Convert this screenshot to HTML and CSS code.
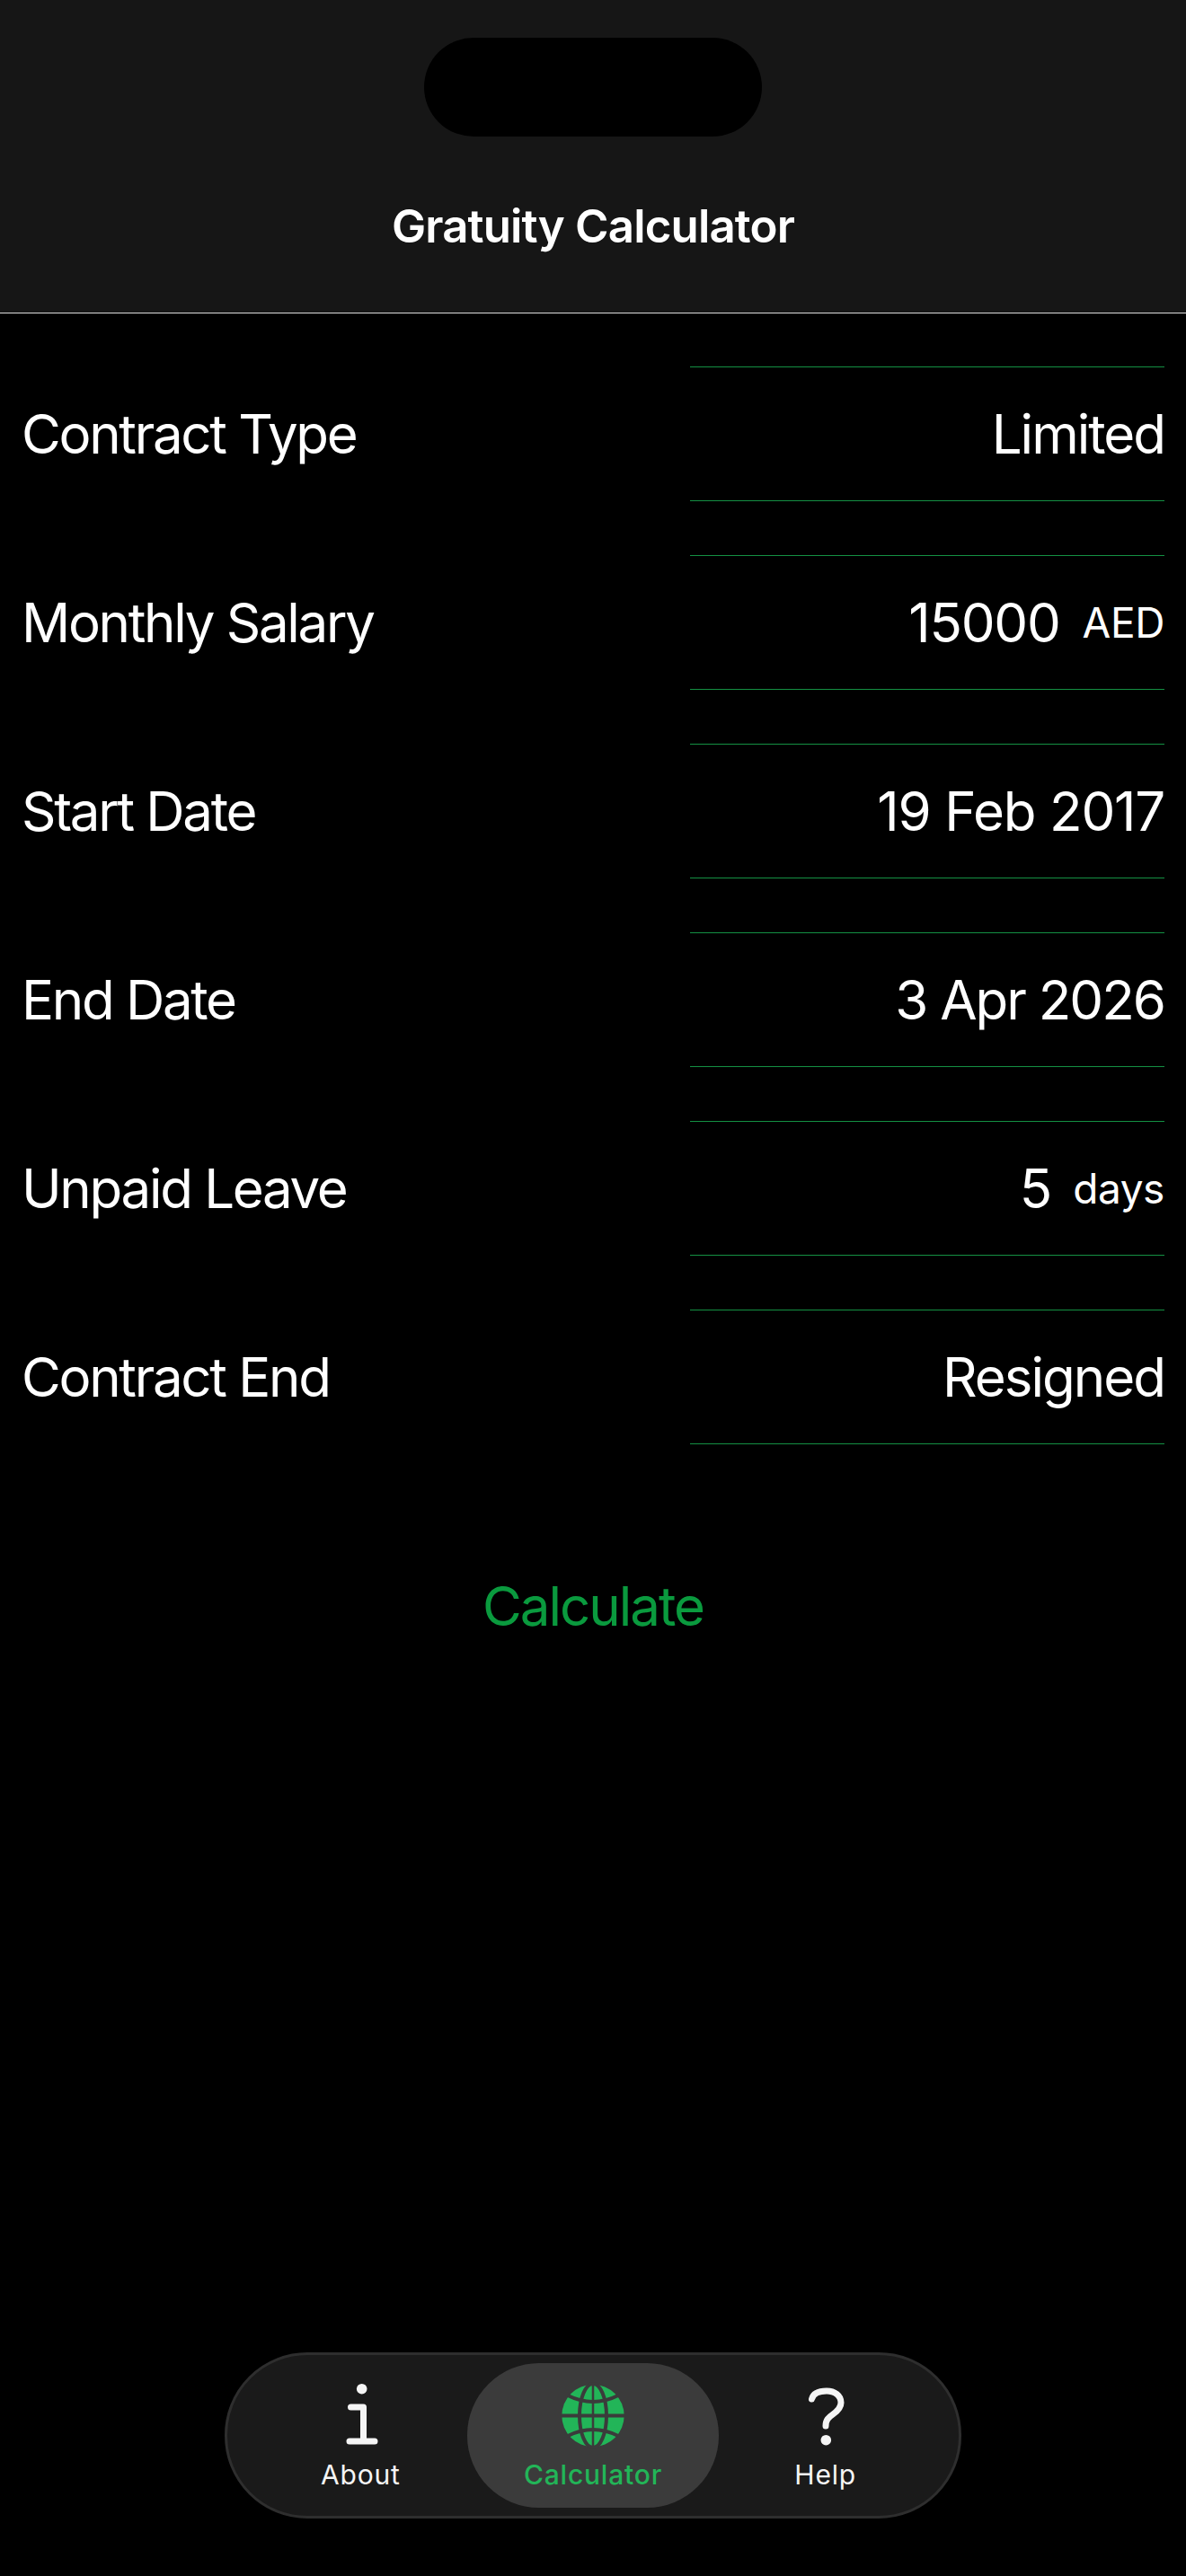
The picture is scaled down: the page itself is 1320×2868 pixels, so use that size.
FILE: index.html
```html
<!DOCTYPE html>
<html lang="en">
<head>
<meta charset="utf-8">
<title>Gratuity Calculator</title>
<link rel="stylesheet" href="styles.css">
</head>
<body>
<header class="topbar">
  <div class="island"></div>
  <h1 class="title">Gratuity Calculator</h1>
</header>
<main class="form">
  <div class="row"><span class="label">Contract Type</span><div class="field"><span class="value">Limited</span></div></div>
  <div class="row"><span class="label">Monthly Salary</span><div class="field"><span class="value value-digits">15000</span><span class="unit">AED</span></div></div>
  <div class="row"><span class="label">Start Date</span><div class="field"><span class="value value-digits">19 Feb 2017</span></div></div>
  <div class="row"><span class="label">End Date</span><div class="field"><span class="value">3 Apr 2026</span></div></div>
  <div class="row"><span class="label">Unpaid Leave</span><div class="field"><span class="value">5</span><span class="unit">days</span></div></div>
  <div class="row"><span class="label">Contract End</span><div class="field"><span class="value">Resigned</span></div></div>
  <button class="calc" type="button">Calculate</button>
</main>
<nav class="tabbar">
  <div class="tab">
    <svg class="icon" viewBox="0 0 80 80" width="80" height="80"><circle cx="41.7" cy="10.7" r="5.8" fill="#f5f5f5"/><path d="M29.5 31H43.5V69M28 69H56" fill="none" stroke="#f5f5f5" stroke-width="7" stroke-linecap="round" stroke-linejoin="round"/></svg>
    <span class="tab-label">About</span>
  </div>
  <div class="tab tab-active">
    <svg class="icon" viewBox="0 0 80 80" width="80" height="80"><circle cx="40" cy="40.5" r="34.7" fill="#22b558"/><g fill="none" stroke="#3b3b3b"><path d="M40 5V76" stroke-width="2.5"/><path d="M5 40.5H75" stroke-width="4"/><ellipse cx="40" cy="40.5" rx="15" ry="35.5" stroke-width="4"/><path d="M12 18Q40 32 68 18M12 63Q40 49 68 63" stroke-width="4"/></g></svg>
    <span class="tab-label">Calculator</span>
  </div>
  <div class="tab">
    <svg class="icon" viewBox="0 0 80 80" width="80" height="80"><path d="M24.5 22C26 16 32 13 41 13C50 13 57 18 57 26C57 32 53 35.5 48 39C43 42.500 40 45 40 52" fill="none" stroke="#f5f5f5" stroke-width="7" stroke-linecap="round"/><circle cx="40.300" cy="67.700" r="5.800" fill="#f5f5f5"/></svg>
    <span class="tab-label">Help</span>
  </div>
</nav>
</body>
</html>
```
FILE: styles.css
```css
* { box-sizing: border-box; }
html, body { margin: 0; padding: 0; }
body {
  width: 1320px;
  height: 2868px;
  background: #000;
  color: #fff;
  font-family: Inter, "Liberation Sans", sans-serif;
  display: flex;
  flex-direction: column;
  overflow: hidden;
}
.topbar {
  height: 349px;
  flex: none;
  background: #161616;
  border-bottom: 1px solid #dcdcdc;
  padding-top: 42px;
  display: flex;
  flex-direction: column;
  align-items: center;
}
.island {
  width: 376px;
  height: 110px;
  border-radius: 55px;
  background: #000;
}
.title {
  margin: 70px 0 0;
  font-size: 51px;
  line-height: 60px;
  font-weight: 600;
  letter-spacing: -0.85px;
}
.form {
  flex: 1;
  padding: 59px 24px 0 24px;
  display: flex;
  flex-direction: column;
  gap: 60px;
}
.row {
  height: 150px;
  display: flex;
  align-items: center;
  justify-content: space-between;
}
.label {
  font-size: 60px;
  line-height: 70px;
  letter-spacing: -2.3px;
}
.field {
  width: 528px;
  height: 150px;
  border-top: 1px solid #149043;
  border-bottom: 1px solid #149043;
  display: flex;
  align-items: center;
  justify-content: flex-end;
  gap: 25px;
}
.value {
  font-size: 60px;
  line-height: 70px;
  letter-spacing: -2px;
}
.value-digits {
  letter-spacing: -1.2px;
}
.unit {
  font-size: 46px;
  line-height: 70px;
  letter-spacing: -0.4px;
}
.calc {
  align-self: center;
  margin-top: 85px;
  padding: 0;
  background: none;
  border: 0;
  color: #0a9a3e;
  font-family: inherit;
  font-size: 60px;
  line-height: 70px;
  letter-spacing: -2px;
}
.tabbar {
  flex: none;
  align-self: center;
  width: 820px;
  height: 185px;
  margin-bottom: 64px;
  padding: 0 19px;
  border: 3px solid #2e2e2e;
  border-radius: 92px;
  background: #1a1a1a;
  display: flex;
  align-items: center;
}
.tab {
  width: 259px;
  height: 161px;
  display: flex;
  flex-direction: column;
  align-items: center;
  color: #f5f5f5;
}
.tab-active {
  width: 281px;
  margin: 0 -11px;
  border-radius: 80px;
  background: #3b3b3b;
  color: #22b558;
  font-weight: 500;
}
.icon {
  margin-top: 18px;
  display: block;
}
.tab-label {
  margin-top: 8px;
  font-size: 30px;
  line-height: 36px;
  letter-spacing: 0.8px;
}
```
